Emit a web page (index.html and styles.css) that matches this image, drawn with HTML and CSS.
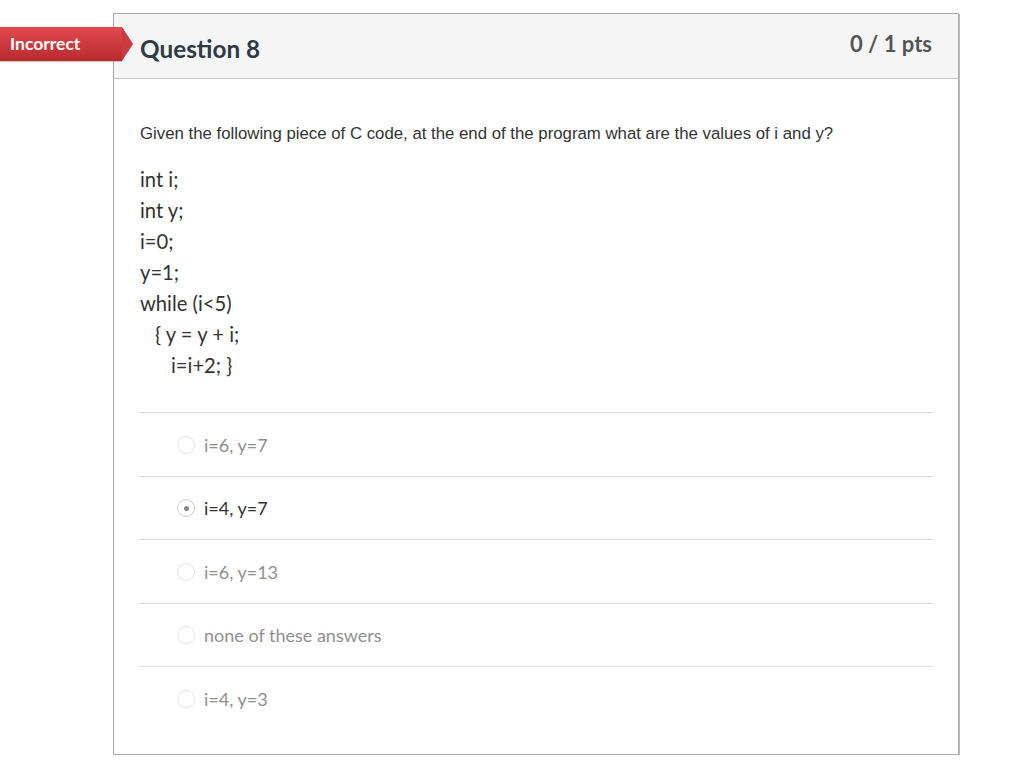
FILE: index.html
```html
<!DOCTYPE html>
<html>
<head>
<meta charset="utf-8">
<link rel="stylesheet" href="styles.css">
</head>
<body>
<div class="badge">Incorrect</div>
<div class="card">
  <div class="card-header">
    <div class="title">Question 8</div>
    <div class="pts">0 / 1 pts</div>
  </div>
  <div class="card-body">
    <p class="prompt">Given the following piece of C code, at the end of the program what are the values of i and y?</p>
    <div class="code">
      <div class="line">int i;</div>
      <div class="line">int y;</div>
      <div class="line">i=0;</div>
      <div class="line">y=1;</div>
      <div class="line">while (i&lt;5)</div>
      <div class="line ind1">{ y = y + i;</div>
      <div class="line ind2">i=i+2; }</div>
    </div>
    <div class="answers">
      <div class="answer"><span class="radio"></span><span class="label">i=6, y=7</span></div>
      <div class="answer selected"><span class="radio"></span><span class="label">i=4, y=7</span></div>
      <div class="answer"><span class="radio"></span><span class="label">i=6, y=13</span></div>
      <div class="answer"><span class="radio"></span><span class="label">none of these answers</span></div>
      <div class="answer"><span class="radio"></span><span class="label">i=4, y=3</span></div>
    </div>
  </div>
</div>
</body>
</html>
```

FILE: styles.css
```css
html, body {
  margin: 0;
  padding: 0;
  background: #fff;
  font-family: Lato, "Open Sans", sans-serif;
}
body {
  padding: 13px 0 0 113px;
  position: relative;
}
.badge {
  position: absolute;
  left: 0;
  top: 27px;
  height: 34px;
  width: 122px;
  box-sizing: border-box;
  padding-left: 10px;
  line-height: 33px;
  color: #fff;
  font-weight: 700;
  font-size: 17.5px;
  background: linear-gradient(#e24a4f, #b72a2d);
  z-index: 2;
  box-shadow: 0 1px 1px rgba(0,0,0,0.2);
}
.badge::after {
  content: "";
  position: absolute;
  left: 122px;
  top: 0;
  width: 0;
  height: 0;
  border-top: 17px solid transparent;
  border-bottom: 17px solid transparent;
  border-left: 11px solid #cc3a3e;
}
.card {
  width: 846px;
  box-sizing: border-box;
  border: 1px solid #aaa;
  box-shadow: 1px 1px 0 #bbb;
}
.card-header {
  height: 64px;
  background: #f5f5f5;
  border-bottom: 1px solid #c7c7c7;
  display: flex;
  align-items: center;
  justify-content: space-between;
  padding: 0 26px 0 26px;
}
.title {
  font-size: 24.3px;
  font-weight: 700;
  color: #2d3b45;
  margin-top: 5px;
}
.pts {
  font-size: 22px;
  font-weight: 700;
  color: #555;
  margin-top: -6px;
}
.card-body {
  padding: 44px 25px 24px 25px;
}
.prompt {
  margin: 0 0 0 1px;
  font-family: "Liberation Sans", Arial, sans-serif;
  font-size: 16.8px;
  line-height: 22px;
  color: #333;
}
.code {
  margin: 19px 0 31px 1px;
  font-size: 20.2px;
  line-height: 31px;
  color: #333;
}
.ind1 { padding-left: 15px; }
.ind2 { padding-left: 31px; }
.answer {
  border-top: 1px solid #ddd;
  height: 63.5px;
  display: flex;
  align-items: center;
  padding-left: 38px;
  font-size: 18px;
  color: #8f8f8f;
  padding-top: 1px;
  box-sizing: border-box;
}
.radio {
  width: 18px;
  height: 18px;
  border-radius: 50%;
  border: 1px solid #e4e4e4;
  box-sizing: border-box;
  margin-right: 9px;
  position: relative;
  background: #fff;
}
.selected { color: #333; }
.selected .radio { border-color: #ccc; }
.selected .radio::after {
  content: "";
  position: absolute;
  left: 6px;
  top: 6px;
  width: 5px;
  height: 5px;
  border-radius: 50%;
  background: #888;
  margin: -0.5px;
}
```
